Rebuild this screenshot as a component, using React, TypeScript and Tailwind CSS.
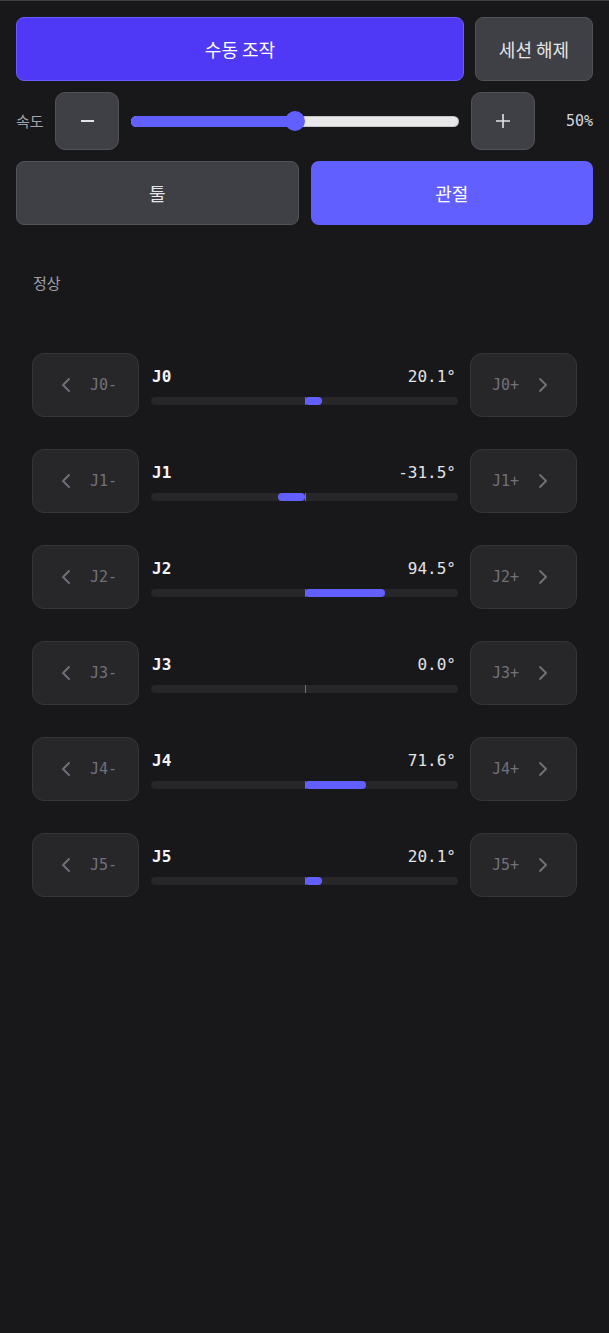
import React from "react";

const joints = [
  { name: "J0", value: 20.1 },
  { name: "J1", value: -31.5 },
  { name: "J2", value: 94.5 },
  { name: "J3", value: 0.0 },
  { name: "J4", value: 71.6 },
  { name: "J5", value: 20.1 },
];

const kr = { fontFamily: '"Noto Sans CJK KR", "Noto Sans", sans-serif' };
const mono = { fontFamily: '"DejaVu Sans Mono", "Liberation Mono", monospace' };

function ChevLeft() {
  return (
    <svg width="24" height="24" viewBox="0 0 24 24" fill="none" stroke="currentColor" strokeWidth="1.8" strokeLinecap="round" strokeLinejoin="round">
      <path d="M15 18l-6-6 6-6" />
    </svg>
  );
}
function ChevRight() {
  return (
    <svg width="24" height="24" viewBox="0 0 24 24" fill="none" stroke="currentColor" strokeWidth="1.8" strokeLinecap="round" strokeLinejoin="round">
      <path d="M9 18l6-6-6-6" />
    </svg>
  );
}

function JointRow({ name, value }: { name: string; value: number }) {
  const frac = Math.min(Math.abs(value) / 180, 1) * 50;
  const fillStyle: React.CSSProperties =
    value >= 0
      ? { left: "50%", width: `${frac}%` }
      : { right: "50%", width: `${frac}%` };
  return (
    <div className="flex items-center gap-3 h-16">
      <button className="w-[107px] h-16 shrink-0 rounded-xl bg-[#27272a] border border-[#34343a] flex items-center justify-center gap-3 text-[#71717a]">
        <ChevLeft />
        <span className="text-[15px]" style={mono}>{name}-</span>
      </button>
      <div className="flex-1 flex flex-col gap-2">
        <div className="flex items-center justify-between h-6">
          <span className="text-base font-bold text-[#f4f4f5] pl-px" style={mono}>{name}</span>
          <span className="text-base text-[#e4e4e7] pr-0.5" style={mono}>{value.toFixed(1)}°</span>
        </div>
        <div className="relative h-2 rounded-full bg-[#27272a]">
          {value !== 0 && (
            <div className="absolute top-0 h-2 rounded-full bg-[#615fff]" style={fillStyle} />
          )}
          <div className="absolute top-0 left-1/2 h-2 w-px bg-[#71717a]" />
        </div>
      </div>
      <button className="w-[107px] h-16 shrink-0 rounded-xl bg-[#27272a] border border-[#34343a] flex items-center justify-center gap-3 text-[#71717a]">
        <span className="text-[15px]" style={mono}>{name}+</span>
        <ChevRight />
      </button>
    </div>
  );
}

export default function App() {
  return (
    <div className="min-h-[1333px] w-full bg-[#18181b] border-t border-[#3f3f46]" style={kr}>
      <div className="px-4 pt-4 flex flex-col gap-[11px]">
        <div className="flex gap-[11px]">
          <button className="flex-1 h-16 rounded-lg bg-[#4f39f6] border border-[#6a5cff] text-white text-lg">
            수동 조작
          </button>
          <button className="w-[118px] h-16 rounded-lg bg-[#3f3f46] border border-[#52525b] text-[#e4e4e7] text-lg">
            세션 해제
          </button>
        </div>
        <div className="flex items-center gap-3 h-[58px]">
          <span className="text-[15px] text-[#a1a1aa] w-[28px] -mr-px whitespace-nowrap">속도</span>
          <button className="w-16 h-[58px] rounded-[10px] bg-[#3f3f46] border border-[#52525b] flex items-center justify-center">
            <span className="block w-[13px] h-[2px] bg-[#e4e4e7]" />
          </button>
          <div className="relative flex-1 h-[11px] rounded-full bg-[#e8e8e8] border border-[#a1a1aa]/50">
            <div className="absolute -left-px -top-px h-[11px] w-1/2 rounded-full bg-[#615fff]" />
            <div className="absolute left-1/2 top-1/2 -translate-x-1/2 -translate-y-1/2 w-5 h-5 rounded-full bg-[#615fff]" />
          </div>
          <button className="w-16 h-[58px] rounded-[10px] bg-[#3f3f46] border border-[#52525b] flex items-center justify-center text-[#e4e4e7]">
            <svg width="14" height="14" viewBox="0 0 14 14" stroke="currentColor" strokeWidth="1.6">
              <path d="M7 0v14M0 7h14" />
            </svg>
          </button>
          <span className="w-[46px] text-right text-[15px] text-[#d4d4d8]" style={mono}>50%</span>
        </div>
        <div className="grid grid-cols-2 gap-3">
          <button className="h-16 rounded-lg bg-[#3f3f46] border border-[#52525b] text-[#e4e4e7] text-lg">
            툴
          </button>
          <button className="h-16 rounded-lg bg-[#615fff] text-white text-lg">
            관절
          </button>
        </div>
      </div>
      <div className="px-8 pt-[48px]">
        <div className="text-[15px] text-[#a1a1aa] pl-px h-5 leading-5">정상</div>
        <div className="flex flex-col gap-8 mt-[60px]">
          {joints.map((j) => (
            <JointRow key={j.name} name={j.name} value={j.value} />
          ))}
        </div>
      </div>
    </div>
  );
}
